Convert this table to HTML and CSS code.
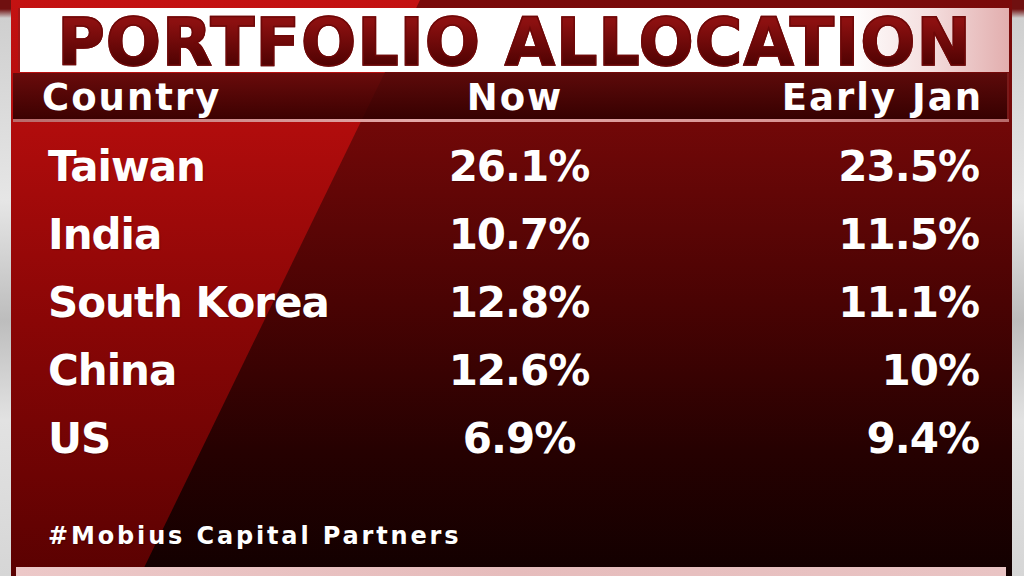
FILE: index.html
```html
<!DOCTYPE html>
<html lang="en">
  <head>
    <meta charset="UTF-8" />
    <meta name="viewport" content="width=device-width, initial-scale=1.0" />
    <title>Portfolio Allocation</title>
    <link rel="stylesheet" href="styles.css">
  </head>
  <body>
    <div class="screen">
      <section class="board">
        <h1 class="title"><span>PORTFOLIO ALLOCATION</span></h1>
        <div class="head">
          <span>Country</span>
          <span class="mid">Now</span>
          <span class="end">Early Jan</span>
        </div>
        <div class="rule"></div>
        <div class="panel">
          <div class="row"><span>Taiwan</span><span class="mid">26.1%</span><span class="end">23.5%</span></div>
          <div class="row"><span>India</span><span class="mid">10.7%</span><span class="end">11.5%</span></div>
          <div class="row"><span>South Korea</span><span class="mid">12.8%</span><span class="end">11.1%</span></div>
          <div class="row"><span>China</span><span class="mid">12.6%</span><span class="end">10%</span></div>
          <div class="row"><span>US</span><span class="mid">6.9%</span><span class="end">9.4%</span></div>
          <p class="source">#Mobius Capital Partners</p>
        </div>
        <div class="strip"></div>
      </section>
    </div>
  </body>
</html>
```

FILE: styles.css
```css
* {
  margin: 0;
  padding: 0;
  box-sizing: border-box;
}
body {
  background-color: #d9d9d9;
  font-family: "DejaVu Sans", "Liberation Sans", sans-serif;
}
.screen {
  width: 1024px;
  height: 576px;
  display: flex;
  padding-left: 11px;
  overflow: hidden;
  background: linear-gradient(180deg, #701010 0, #701010 9px, #cfcfcf 18px, #e6e6e6 200px, #bdbdbd 320px, #e2e2e2 420px, #d6d6d6 576px);
}
.board {
  position: relative;
  width: 1001px;
  height: 576px;
  display: flex;
  flex-direction: column;
  padding-top: 8px;
  background: linear-gradient(180deg, #7a0a0a 0, #720808 122px, #4a0303 300px, #260101 450px, #120000 576px);
}
/* bright red wedge on the left */
.board::before {
  content: "";
  position: absolute;
  top: 0;
  left: 0;
  right: 0;
  bottom: 0;
  clip-path: polygon(0 0, 409px 0, 129px 100%, 0 100%);
  background: linear-gradient(180deg, #c41212 0, #b00c0c 130px, #8a0606 320px, #5a0101 576px);
}
.board > * {
  position: relative;
}
.title {
  height: 64px;
  margin: 0 3px 0 7px;
  border-left: 2px solid #a51616;
  background: linear-gradient(90deg, #fff 0, #fff 84%, #f4dede 92%, #e2aeae 100%);
  text-align: center;
  font-size: 65px;
  font-weight: 700;
  letter-spacing: 1px;
  line-height: 69px;
  white-space: nowrap;
}
.title span {
  display: inline-block;
  background: linear-gradient(180deg, #8c1010 20%, #4e0202 85%);
  -webkit-background-clip: text;
  background-clip: text;
  color: transparent;
  -webkit-text-stroke: 1.5px #6e0808;
}
.head {
  height: 46px;
  margin: 1px 3px 0 2px;
  padding: 0 24px 0 29px;
  display: grid;
  grid-template-columns: 398px 150px 1fr;
  background: linear-gradient(180deg, rgba(88, 10, 10, 0.82), rgba(48, 0, 0, 0.9));
  border-right: 2px solid #7a1a1a;
  color: #fff;
  font-size: 37px;
  font-weight: 700;
  letter-spacing: 2px;
  line-height: 49px;
  white-space: nowrap;
}
.rule {
  height: 3px;
  margin: 0 3px 0 2px;
  background: linear-gradient(90deg, #b86a6a, #e4a8a8 40%, #d89494 80%, #b86a6a);
}
.panel {
  flex: 1;
  padding: 11px 33px 0 37px;
  color: #fff;
  text-shadow: 1px 1px 1px rgba(0, 0, 0, 0.25);
}
.row {
  display: grid;
  grid-template-columns: 396px 150px 1fr;
  font-size: 42px;
  font-weight: 700;
  letter-spacing: -1px;
  line-height: 68px;
  white-space: nowrap;
}
.mid {
  text-align: center;
}
.end {
  text-align: right;
}
.source {
  margin-top: 48px;
  font-size: 24px;
  font-weight: 700;
  letter-spacing: 2.85px;
  line-height: 30px;
}
.strip {
  height: 9px;
  margin: 0 6px 0 5px;
  background: linear-gradient(90deg, #ecc8c8, #e6bcbc 50%, #e9c4c4);
}
```
